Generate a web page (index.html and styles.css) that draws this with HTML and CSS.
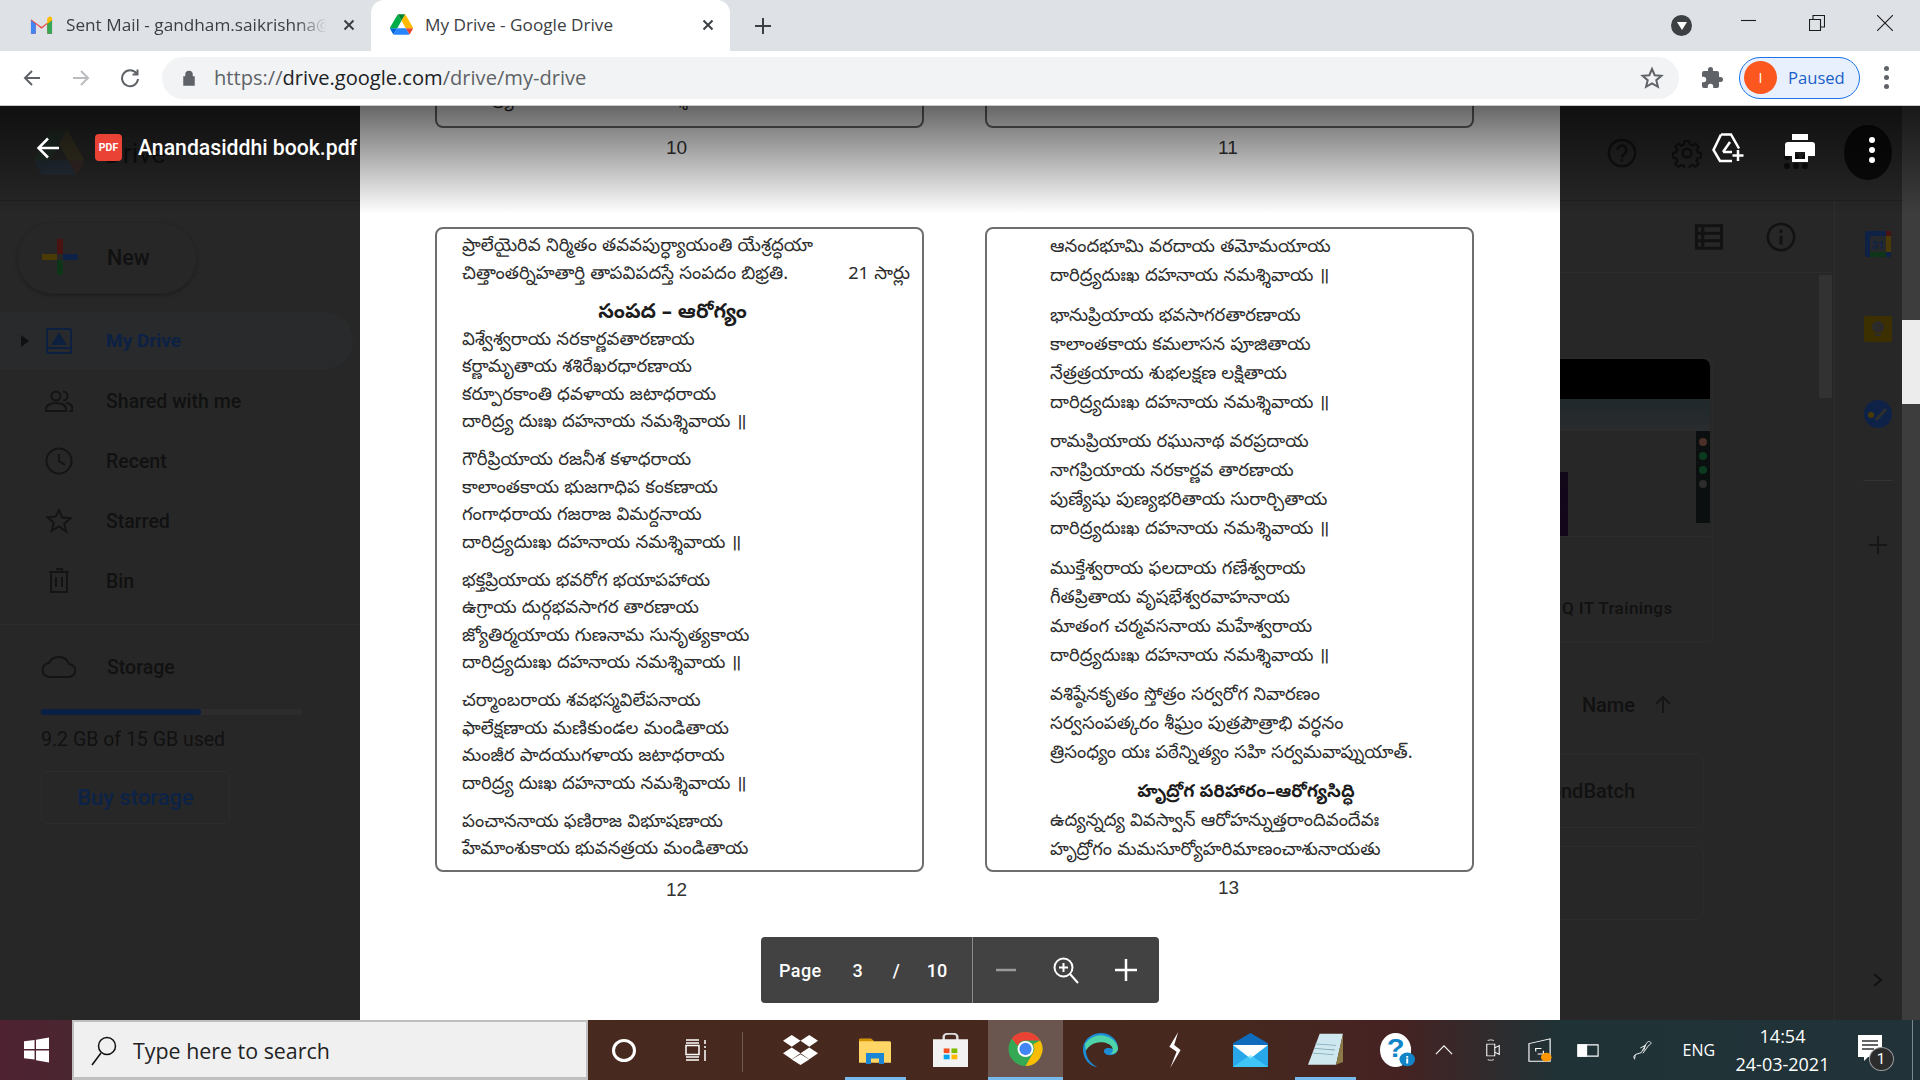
FILE: index.html
```html
<!DOCTYPE html>
<html lang="te">
<head>
    <meta charset="UTF-8">
    <title>My Drive - Google Drive</title>
    <link rel="stylesheet" href="styles.css">
</head>
<body>
    <!-- browser tabs -->
    <div class="tabstrip">
        <div class="tab">
            <svg class="favicon" viewBox="0 0 24 18"><path d="M1 18V3l11 8 11-8v15h-5V8l-6 5-6-5v10z" fill="#ea4335"/><path d="M1 18h5V8L1 4z" fill="#4285f4"/><path d="M18 18h5V4l-5 4z" fill="#34a853"/><path d="M18 8l5-4V2c0-1.500-2-2.500-3-1.500L18 2z" fill="#fbbc04"/></svg>
            <span class="tab-title fade">Sent Mail - gandham.saikrishna@</span>
            <svg class="tab-close" viewBox="0 0 12 12"><path d="M1.500 1.500l9 9m0-9l-9 9"/></svg>
        </div>
        <div class="tab tab-active">
            <svg class="favicon" viewBox="0 0 87.300 78"><use href="#drive-logo"/></svg>
            <span class="tab-title">My Drive - Google Drive</span>
            <svg class="tab-close" viewBox="0 0 12 12"><path d="M1.500 1.500l9 9m0-9l-9 9"/></svg>
        </div>
        <svg class="newtab" viewBox="0 0 18 18"><path d="M9 1v16M1 9h16"/></svg>
        <div class="window-btns">
            <span class="tabsearch"><svg viewBox="0 0 10 8"><path d="M0 0h10L5 8z" fill="#fff"/></svg></span>
            <svg class="win-icon" viewBox="0 0 16 16"><path d="M0 5.500h15"/></svg>
            <svg class="win-icon" viewBox="0 0 16 16"><path d="M.5 4.500h11v11H.5zM4 4.500V.5h11.500V12h-4"/></svg>
            <svg class="win-icon" viewBox="0 0 16 16"><path d="M0 0l16 16M16 0L0 16"/></svg>
        </div>
    </div>

    <!-- address bar -->
    <div class="toolbar">
        <div class="nav-btns">
            <svg class="nav-icon" viewBox="0 0 20 20"><path d="M18 10H3m7-7l-7 7 7 7"/></svg>
            <svg class="nav-icon nav-off" viewBox="0 0 20 20"><path d="M2 10h15m-7-7l7 7-7 7"/></svg>
            <svg class="nav-icon" viewBox="0 0 20 20"><path d="M16.500 5.500A8 8 0 1 0 18 11M17.500 1.500v5h-5" /></svg>
        </div>
        <div class="omnibox">
            <svg class="lock" viewBox="0 0 12 16"><path d="M1 7h10v8H1zM3 7V4.500a3 3 0 0 1 6 0V7" fill="#5f6368" stroke="#5f6368" stroke-width="1.500"/></svg>
            <span class="url"><span class="url-dim">https://</span>drive.google.com<span class="url-dim">/drive/my-drive</span></span>
            <svg class="star" viewBox="0 0 24 24"><path d="M12 3l2.700 6.200 6.700.6-5.100 4.400 1.600 6.600-5.900-3.500-5.900 3.500 1.600-6.600L2.600 9.800l6.700-.6z"/></svg>
        </div>
        <svg class="puzzle" viewBox="0 0 24 24"><path d="M20.500 11H19V7a2 2 0 0 0-2-2h-4V3.500a2.500 2.500 0 0 0-5 0V5H4a2 2 0 0 0-2 2v3.800h1.500a2.700 2.700 0 0 1 0 5.400H2V20a2 2 0 0 0 2 2h3.800v-1.500a2.700 2.700 0 0 1 5.400 0V22H17a2 2 0 0 0 2-2v-4h1.500a2.500 2.500 0 0 0 0-5z" fill="#5f6368"/></svg>
        <div class="paused">
            <span class="avatar">I</span>
            <span>Paused</span>
        </div>
        <div class="chrome-menu"><i></i><i></i><i></i></div>
    </div>

    <div class="viewer">
        <!-- drive page, dimmed behind the pdf preview -->
        <div class="drive">
            <div class="drive-head">
                <svg class="drive-logo" viewBox="0 0 87.300 78"><use href="#drive-logo"/></svg>
                <span class="drive-name">Drive</span>
                <div class="head-icons">
                    <svg class="dim-icon" viewBox="0 0 24 24"><circle cx="12" cy="12" r="10.500"/><path d="M8.500 9.500a3.500 3.500 0 1 1 5.500 3c-1.300.9-2 1.500-2 3M12 17v2"/></svg>
                    <svg class="dim-icon" viewBox="0 0 24 24"><circle cx="12" cy="12" r="3.500"/><path d="M10 1.500h4l.6 3 2.300 1 2.600-1.700 2.800 2.800-1.700 2.600 1 2.300 3 .6v4l-3 .6-1 2.300 1.700 2.600-2.800 2.800-2.600-1.700-2.300 1-.6 3h-4l-.6-3-2.300-1-2.600 1.700-2.800-2.800 1.700-2.600-1-2.300-3-.6v-4l3-.6 1-2.300-1.700-2.600 2.800-2.800 2.600 1.700 2.300-1z" transform="translate(-.2 -.2) scale(.9) translate(1.500 1.500)"/></svg>
                    <div class="waffle"><i></i><i></i><i></i><i></i><i></i><i></i><i></i><i></i><i></i></div>
                    <span class="drive-avatar"></span>
                </div>
            </div>
            <div class="drive-body">
                <aside class="sidebar">
                    <div class="new-btn">
                        <svg class="new-plus" viewBox="0 0 36 36"><path d="M15 0h6v15h-6z" fill="#4a1210"/><path d="M21 15h15v6H21z" fill="#0e2248"/><path d="M15 21h6v15h-6z" fill="#0e3518"/><path d="M0 15h15v6H0z" fill="#4a3a06"/></svg>
                        <span>New</span>
                    </div>
                    <nav class="side-nav">
                        <div class="side-row side-selected">
                            <svg class="caret" viewBox="0 0 8 12"><path d="M0 0l8 6-8 6z"/></svg>
                            <svg class="side-icon blue" viewBox="0 0 28 28"><path d="M3 2h22a1 1 0 0 1 1 1v22a1 1 0 0 1-1 1H3a1 1 0 0 1-1-1V3a1 1 0 0 1 1-1zM2 21h24"/><path d="M14 7l6 10H8z" fill="#0d2040"/></svg>
                            <span>My Drive</span>
                        </div>
                        <div class="side-row">
                            <svg class="side-icon" viewBox="0 0 28 28"><circle cx="11" cy="9" r="4.500"/><path d="M1 24v-2c0-4 5-6 10-6s10 2 10 6v2zM18 4.500a4.500 4.500 0 0 1 0 9M21 16c4 .5 6.500 2.500 6.500 6v2H24"/></svg>
                            <span>Shared with me</span>
                        </div>
                        <div class="side-row">
                            <svg class="side-icon" viewBox="0 0 28 28"><circle cx="14" cy="14" r="12.500"/><path d="M14 7v7l6 4"/></svg>
                            <span>Recent</span>
                        </div>
                        <div class="side-row">
                            <svg class="side-icon" viewBox="0 0 28 28"><path d="M14 3l3.300 7.600 8.200.7-6.200 5.400 1.900 8L14 19.500 6.800 23.700l1.900-8-6.200-5.400 8.200-.7z"/></svg>
                            <span>Starred</span>
                        </div>
                        <div class="side-row">
                            <svg class="side-icon" viewBox="0 0 28 28"><path d="M4 5h20M6 5v20h16V5M11 2h6v3M11 10v10m6-10v10"/></svg>
                            <span>Bin</span>
                        </div>
                    </nav>
                    <div class="storage">
                        <div class="storage-row">
                            <svg class="side-icon wide" viewBox="0 0 36 24"><path d="M9 22a7 7 0 0 1-1-14A11 11 0 0 1 28 9a6.500 6.500 0 0 1-.5 13z"/></svg>
                            <span>Storage</span>
                        </div>
                        <div class="quota"><div class="quota-fill"></div></div>
                        <div class="quota-text">9.2 GB of 15 GB used</div>
                        <div class="buy-btn">Buy storage</div>
                    </div>
                </aside>

                <main class="drive-main">
                    <div class="main-bar">
                        <svg class="dim-icon" viewBox="0 0 24 24"><path d="M2 3h20v18H2zM2 9h20M2 15h20M7 3v18" stroke-width="2.500"/></svg>
                        <svg class="dim-icon" viewBox="0 0 24 24"><circle cx="12" cy="12" r="10.500"/><path d="M12 11v7M12 6v2.500" stroke-width="2.500"/></svg>
                    </div>
                    <div class="main-scroll">
                        <div class="files">
                            <div class="preview">
                                <div class="thumb-black"></div>
                                <div class="thumb-strip"></div>
                                <div class="thumb-body">
                                    <div class="thumb-photo"></div>
                                    <div class="thumb-rail"><i class="dot-a"></i><i class="dot-b"></i><i class="dot-b"></i><i class="dot-c"></i></div>
                                </div>
                                <div class="preview-name">Q IT Trainings</div>
                            </div>
                            <div class="sort-row">
                                <span>Name</span>
                                <svg class="sort-arrow" viewBox="0 0 20 20"><path d="M10 18V3M3 9l7-7 7 7"/></svg>
                            </div>
                            <div class="file-row">ondBatch</div>
                            <div class="file-row"></div>
                        </div>
                        <div class="inner-scrollbar"><div class="inner-thumb"></div></div>
                    </div>
                </main>

                <div class="rail">
                    <svg class="rail-app cal" viewBox="0 0 28 28"><rect x="1" y="1" width="26" height="26" rx="2" fill="#0e2248"/><rect x="6" y="6" width="16" height="16" fill="#26282c"/><path d="M22 1h5v5h-5z" fill="#4a1210"/><path d="M22 6h5v16h-5z" fill="#4a3a06"/><path d="M6 22h16v5H6z" fill="#0e3518"/><text x="14" y="19" class="cal-num">31</text></svg>
                    <svg class="rail-app" viewBox="0 0 28 28"><rect y="1" width="28" height="26" rx="2" fill="#3d3000"/><circle cx="14" cy="12" r="6" fill="#2b2b2b"/><path d="M11 19h6v2h-6z" fill="#2b2b2b"/></svg>
                    <svg class="rail-app" viewBox="0 0 28 28"><circle cx="14" cy="14" r="14" fill="#0e2248"/><circle cx="7" cy="15" r="3" fill="#4a3a06"/><path d="M12 20L22 9" stroke="#2f2f2f" stroke-width="3" fill="none"/></svg>
                    <div class="rail-line"></div>
                    <svg class="rail-plus" viewBox="0 0 18 18"><path d="M9 0v18M0 9h18"/></svg>
                    <svg class="rail-chev" viewBox="0 0 10 14"><path d="M1 1l7 6-7 6"/></svg>
                </div>
            </div>
        </div>
        <div class="page-scroll"><div class="page-thumb"></div></div>

        <!-- pdf pages -->
        <div class="pdf">
            <div class="spread">
                <div class="pdf-page pdf-cut"><span class="line">దారిద్ర్య దుఃఖ దహనాయ నమశ్శివాయ ॥</span></div>
                <div class="pdf-page pdf-cut"></div>
                <div class="pageno">10</div>
                <div class="pageno">11</div>
            </div>
            <div class="spread spread-main">
                <div class="pdf-page tight">
                    <p class="lines"><span class="line">ప్రాలేయైరివ నిర్మితం తవవపుర్ధ్యాయంతి యేశ్రద్ధయా</span><span class="line line-end"><span>చిత్తాంతర్నిహతార్తి తాపవిపదస్తే సంపదం బిభ్రతి.</span><span>21 సార్లు</span></span></p>
                    <h4 class="verse-title">సంపద – ఆరోగ్యం</h4>
                    <p class="lines"><span class="line">విశ్వేశ్వరాయ నరకార్ణవతారణాయ</span><span class="line">కర్ణామృతాయ శశిరేఖరధారణాయ</span><span class="line">కర్పూరకాంతి ధవళాయ జటాధరాయ</span><span class="line">దారిద్ర్య దుఃఖ దహనాయ నమశ్శివాయ ॥</span></p>
                    <p class="lines"><span class="line">గౌరీప్రియాయ రజనీశ కళాధరాయ</span><span class="line">కాలాంతకాయ భుజగాధిప కంకణాయ</span><span class="line">గంగాధరాయ గజరాజ విమర్దనాయ</span><span class="line">దారిద్ర్యదుఃఖ దహనాయ నమశ్శివాయ ॥</span></p>
                    <p class="lines"><span class="line">భక్తప్రియాయ భవరోగ భయాపహాయ</span><span class="line">ఉగ్రాయ దుర్గభవసాగర తారణాయ</span><span class="line">జ్యోతిర్మయాయ గుణనామ సునృత్యకాయ</span><span class="line">దారిద్ర్యదుఃఖ దహనాయ నమశ్శివాయ ॥</span></p>
                    <p class="lines"><span class="line">చర్మాంబరాయ శవభస్మవిలేపనాయ</span><span class="line">ఫాలేక్షణాయ మణికుండల మండితాయ</span><span class="line">మంజీర పాదయుగళాయ జటాధరాయ</span><span class="line">దారిద్ర్య దుఃఖ దహనాయ నమశ్శివాయ ॥</span></p>
                    <p class="lines"><span class="line">పంచాననాయ ఫణిరాజ విభూషణాయ</span><span class="line">హేమాంశుకాయ భువనత్రయ మండితాయ</span></p>
                </div>
                <div class="pdf-page loose">
                    <p class="lines"><span class="line">ఆనందభూమి వరదాయ తమోమయాయ</span><span class="line">దారిద్ర్యదుఃఖ దహనాయ నమశ్శివాయ ॥</span></p>
                    <p class="lines"><span class="line">భానుప్రియాయ భవసాగరతారణాయ</span><span class="line">కాలాంతకాయ కమలాసన పూజితాయ</span><span class="line">నేత్రత్రయాయ శుభలక్షణ లక్షితాయ</span><span class="line">దారిద్ర్యదుఃఖ దహనాయ నమశ్శివాయ ॥</span></p>
                    <p class="lines"><span class="line">రామప్రియాయ రఘునాథ వరప్రదాయ</span><span class="line">నాగప్రియాయ నరకార్ణవ తారణాయ</span><span class="line">పుణ్యేషు పుణ్యభరితాయ సురార్చితాయ</span><span class="line">దారిద్ర్యదుఃఖ దహనాయ నమశ్శివాయ ॥</span></p>
                    <p class="lines"><span class="line">ముక్తేశ్వరాయ ఫలదాయ గణేశ్వరాయ</span><span class="line">గీతప్రితాయ వృషభేశ్వరవాహనాయ</span><span class="line">మాతంగ చర్మవసనాయ మహేశ్వరాయ</span><span class="line">దారిద్ర్యదుఃఖ దహనాయ నమశ్శివాయ ॥</span></p>
                    <p class="lines"><span class="line">వశిష్ఠేనకృతం స్తోత్రం సర్వరోగ నివారణం</span><span class="line">సర్వసంపత్కరం శీఘ్రం పుత్రపౌత్రాభి వర్ధనం</span><span class="line">త్రిసంధ్యం యః పఠేన్నిత్యం సహి సర్వమవాప్నుయాత్.</span></p>
                    <h4 class="verse-title">హృద్రోగ పరిహారం–ఆరోగ్యసిద్ధి</h4>
                    <p class="lines"><span class="line">ఉద్యన్నద్య వివస్వాన్ ఆరోహన్నుత్తరాందివందేవః</span><span class="line">హృద్రోగం మమసూర్యోహరిమాణంచాశునాయతు</span></p>
                </div>
                <div class="pageno">12</div>
                <div class="pageno pageno-up">13</div>
            </div>
        </div>

        <div class="top-shade"></div>

        <!-- preview header -->
        <div class="pdf-head">
            <svg class="back" viewBox="0 0 24 24"><path d="M23 12H3m9-9.500L2.500 12l9.500 9.500"/></svg>
            <span class="pdf-badge">PDF</span>
            <span class="pdf-title">Anandasiddhi book.pdf</span>
            <div class="pdf-actions">
                <svg class="add-drive" viewBox="0 0 34 30"><path d="M9 1.500h10l8 14M9 1.500L1.500 17 8 28h12M11 19l7-10 M11 19h9" /><path d="M26 17v11M20.500 22.500h11"/></svg>
                <svg class="print" viewBox="0 0 30 28"><path d="M7 0h16v6H7z" fill="#fff"/><path d="M3 8h24a3 3 0 0 1 3 3v11h-7v6H7v-6H0V11a3 3 0 0 1 3-3zm7 10v7h10v-7z" fill="#fff"/></svg>
                <div class="pdf-more"><i></i><i></i><i></i></div>
            </div>
        </div>

        <div class="zoom-bar">
            <div class="zoom-pages">
                <span class="zoom-label">Page</span>
                <span class="zoom-cur">3</span>
                <span class="zoom-sep">/</span>
                <span class="zoom-total">10</span>
            </div>
            <div class="zoom-tools">
                <svg class="zoom-tool tool-off" viewBox="0 0 24 24"><path d="M2 12h20"/></svg>
                <svg class="zoom-tool" viewBox="0 0 28 28"><circle cx="11.500" cy="11.500" r="9"/><path d="M18 18l8 9M11.500 7v9M7 11.500h9" /></svg>
                <svg class="zoom-tool" viewBox="0 0 24 24"><path d="M12 1v22M1 12h22"/></svg>
            </div>
        </div>
    </div>

    <!-- windows taskbar -->
    <div class="taskbar">
        <div class="start"><svg viewBox="0 0 26 26"><path d="M0 4l11-1.500V12H0zM12.500 2.300L26 0v12H12.500zM0 13.500h11V23L0 21.500zM12.500 13.500H26V26l-13.500-2.300z" fill="#fff"/></svg></div>
        <div class="search">
            <svg class="search-icon" viewBox="0 0 26 30"><circle cx="16" cy="10" r="8.500"/><path d="M10 17L1 29"/></svg>
            <span>Type here to search</span>
        </div>
        <div class="tb-icons">
            <div class="tb-slot tb-small"><span class="cortana"></span></div>
            <div class="tb-slot tb-small"><svg class="ic-view" viewBox="0 0 22 22" preserveAspectRatio="none"><path d="M1 1h13M1 4h13M1 6.500h13v9H1zM1 18h13M1 21h13M20 1v4M20 7v2M20 11v11"/></svg></div>
            <div class="tb-sep"></div>
            <div class="tb-slot"><svg class="ic-dropbox" viewBox="0 0 36 36" preserveAspectRatio="none"><path d="M9 0l9 7-9 7-9-7zM27 0l9 7-9 7-9-7zM9 15l9 7-9 7-9-7zM27 15l9 7-9 7-9-7zM18 23l9 6.500-9 6.500-9-6.500z" fill="#fff"/></svg></div>
            <div class="tb-slot tb-open"><svg class="ic-folder" viewBox="0 0 32 44" preserveAspectRatio="none"><path d="M0 5a2 2 0 0 1 2-2h10l3 4h15a2 2 0 0 1 2 2v33H0z" fill="#ffd666"/><path d="M0 3h12l3 4H0z" fill="#d39300"/><path d="M7 26h18v18h-5v-9h-8v9H7z" fill="#1b86d6"/></svg></div>
            <div class="tb-slot"><svg class="ic-square" viewBox="0 0 36 44" preserveAspectRatio="none"><path d="M11 10V5a4 4 0 0 1 4-4h6a4 4 0 0 1 4 4v5" fill="none" stroke="#ddd" stroke-width="2.500"/><path d="M0 8h36v36H0z" fill="#f2f2f2"/><path d="M11 20h6v6h-6z" fill="#f25022"/><path d="M19 20h6v6h-6z" fill="#7fba00"/><path d="M11 28h6v6h-6z" fill="#00a4ef"/><path d="M19 28h6v6h-6z" fill="#ffb900"/></svg></div>
            <div class="tb-slot tb-active">
                <svg class="ic-square" viewBox="0 0 36 36"><circle cx="18" cy="18" r="18" fill="#34a853"/><path d="M18 0a18 18 0 0 1 15.600 9H18a9 9 0 0 0-8.300 5.500L3.400 7A18 18 0 0 1 18 0z" fill="#ea4335"/><path d="M33.600 9A18 18 0 0 1 18 36l7.800-13.500A9 9 0 0 0 26 13z" fill="#fbbc04"/><circle cx="18" cy="18" r="8.500" fill="#fff"/><circle cx="18" cy="18" r="6.500" fill="#4285f4"/></svg>
            </div>
            <div class="tb-slot"><svg class="ic-square" viewBox="0 0 36 40" preserveAspectRatio="none"><path d="M18 0a18 18 0 0 1 18 18c0 5-4 9-10 8-5-1-6-6-2-8 4-1 7 1 7 1-1-7-6-11-13-11-9 0-15 7-15 13 0 8 5 16 12 19C7 40 0 30 0 20A19 19 0 0 1 18 0z" fill="#1b8dd6"/><path d="M2 13A18 18 0 0 1 36 18c0 4-3 7-8 7 6-4 2-14-10-14-7 0-13 5-15 10z" fill="#4fd3a8"/></svg></div>
            <div class="tb-slot"><svg class="ic-slim" viewBox="0 0 20 44" preserveAspectRatio="none"><path d="M14 0L3 18l9 6-8 20 13-22-8-6z" fill="#fff"/></svg></div>
            <div class="tb-slot"><svg class="ic-square" viewBox="0 0 36 40" preserveAspectRatio="none"><path d="M18 0l18 12v28H0V12z" fill="#0f6cbd"/><path d="M0 14h36v26H0z" fill="#28a8ea"/><path d="M0 14l18 16 18-16z" fill="#fff"/><path d="M0 40l18-14 18 14z" fill="#50d9ff" opacity=".6"/></svg></div>
            <div class="tb-slot tb-open"><svg class="ic-square" viewBox="0 0 30 44" preserveAspectRatio="none"><path d="M10 1h20l-6 40H0z" fill="#cfe7ee"/><path d="M6 14l18 2M5 20l18 2M4 26l18 2" stroke="#7fa8b6" fill="none"/><path d="M24 41l6-40 1 36z" fill="#8c7a46"/></svg></div>
            <div class="tb-slot tb-help"><svg class="ic-square" viewBox="0 0 36 40" preserveAspectRatio="none"><ellipse cx="16" cy="20" rx="16" ry="20" fill="#fff"/><text x="16" y="28" class="help-q">?</text><circle cx="28" cy="31" r="8" fill="#1285c9"/><path d="M27 27h2v2h-2zM27 30h2v6h-2z" fill="#fff"/></svg></div>
        </div>
        <div class="tray">
            <svg class="tray-icon tray-up" viewBox="0 0 20 12" preserveAspectRatio="none"><path d="M1 11l9-10 9 10"/></svg>
            <svg class="tray-icon tray-meet" viewBox="0 0 18 30" preserveAspectRatio="none"><path d="M2 7h9v16H2zM11 12l5-3v12l-5-3M3 2c2-1 5-1 7 0M3 28c2 1 5 1 7 0"/></svg>
            <svg class="tray-icon tray-screen" viewBox="0 0 26 30" preserveAspectRatio="none"><path d="M1 7l22-6v28H1zM8 17v-4h6m2 3v4h-6"/><circle cx="19" cy="24" r="5.500" fill="#ff9800" stroke="none"/></svg>
            <svg class="tray-icon tray-batt" viewBox="0 0 24 14" preserveAspectRatio="none"><path d="M1 1h21v12H1z"/><path d="M1 1h9v12H1z" fill="#fff"/></svg>
            <svg class="tray-icon tray-pen" viewBox="0 0 24 30" preserveAspectRatio="none"><path d="M3 28c-2-3 0-6 3-7l5-2 6-13c1-3 3-5 5-3s0 4-2 5l-7 12M10 12l6-4-2 8M4 22l-1 7"/></svg>
            <span class="lang">ENG</span>
            <div class="clock"><span>14:54</span><span>24-03-2021</span></div>
            <div class="notif">
                <svg viewBox="0 0 24 26" preserveAspectRatio="none"><path d="M0 0h24v22H10l-4 4v-4H0z" fill="#fff"/><path d="M4 6h16M4 10h16M4 14h12" stroke="#333" stroke-width="1.500"/></svg>
                <span class="notif-count">1</span>
            </div>
            <div class="peek"></div>
        </div>
    </div>

    <svg class="defs" width="0" height="0">
        <defs>
            <g id="drive-logo">
                <path d="m6.600 66.850 3.850 6.650c.8 1.400 1.950 2.500 3.300 3.300l13.750-23.800h-27.500c0 1.550.4 3.100 1.200 4.500z" fill="#0066da"/>
                <path d="m43.650 25-13.750-23.800c-1.350.8-2.500 1.900-3.300 3.300l-25.400 44a9.060 9.060 0 0 0 -1.200 4.500h27.500z" fill="#00ac47"/>
                <path d="m73.550 76.800c1.350-.8 2.500-1.900 3.300-3.300l1.600-2.750 7.650-13.250c.8-1.400 1.200-2.950 1.200-4.500h-27.502l5.852 11.500z" fill="#ea4335"/>
                <path d="m43.650 25 13.750-23.800c-1.350-.8-2.900-1.200-4.500-1.200h-18.500c-1.600 0-3.150.45-4.500 1.200z" fill="#00832d"/>
                <path d="m59.800 53h-32.300l-13.750 23.800c1.350.8 2.900 1.200 4.500 1.200h50.800c1.600 0 3.150-.45 4.500-1.200z" fill="#2684fc"/>
                <path d="m73.400 26.500-12.700-22c-.8-1.400-1.950-2.500-3.300-3.300l-13.750 23.800 16.150 28h27.450c0-1.550-.4-3.100-1.200-4.500z" fill="#ffba00"/>
            </g>
        </defs>
    </svg>
</body>
</html>
```

FILE: styles.css
```css
* {
    box-sizing: border-box;
}
body {
    margin: 0;
    width: 1920px;
    height: 1080px;
    overflow: hidden;
    display: flex;
    flex-direction: column;
    font-family: Roboto, "Liberation Sans", sans-serif;
    background-color: #272727;
}
.defs {
    position: absolute;
}

/* tabs */
.tabstrip {
    height: 51px;
    display: flex;
    align-items: center;
    background-color: #dee1e6;
}
.tab {
    height: 51px;
    padding: 0 14px 2px 30px;
    display: flex;
    align-items: center;
    flex-shrink: 0;
    width: 359px;
}
.tab:first-child {
    width: 371px;
    padding-right: 16px;
}
.tab-active {
    padding: 0 16px 2px 19px;
    background-color: #ffffff;
    border-radius: 13px 13px 0 0;
}
.favicon {
    width: 23px;
    height: 18px;
    flex-shrink: 0;
}
.tab-active .favicon {
    height: 23px;
}
.tab-title {
    flex: 1;
    margin-left: 13px;
    font-family: "Open Sans", sans-serif;
    font-size: 17.2px;
    color: #3c4043;
    white-space: nowrap;
    overflow: hidden;
}
.tab-active .tab-title {
    margin-left: 12px;
}
.fade {
    -webkit-mask-image: linear-gradient(to right, #000 88%, transparent);
    mask-image: linear-gradient(to right, #000 88%, transparent);
}
.tab-close {
    width: 12px;
    height: 12px;
    margin-left: 16px;
    fill: none;
    stroke: #3c4043;
    stroke-width: 2;
}
.newtab {
    width: 18px;
    height: 18px;
    margin-left: 24px;
    fill: none;
    stroke: #3c4043;
    stroke-width: 2;
}
.window-btns {
    margin-left: auto;
    padding-right: 27px;
    display: flex;
    align-items: center;
}
.tabsearch {
    width: 21px;
    height: 21px;
    border-radius: 50%;
    background-color: #3c4043;
    display: flex;
    align-items: center;
    justify-content: center;
    margin-right: 49px;
}
.tabsearch svg {
    width: 10px;
    height: 8px;
}
.win-icon {
    width: 16px;
    height: 16px;
    margin-left: 52px;
    fill: none;
    stroke: #1c1c1c;
    stroke-width: 1.1;
    margin-bottom: 6px;
}
.tabsearch + .win-icon {
    margin-left: 0;
}

/* address bar */
.toolbar {
    height: 55px;
    display: flex;
    align-items: center;
    padding-bottom: 1px;
    background-color: #ffffff;
    border-bottom: 1px solid #c9c9c9;
}
.nav-btns {
    width: 162px;
    flex-shrink: 0;
    padding-left: 22px;
    display: flex;
    gap: 29px;
}
.nav-icon {
    width: 20px;
    height: 20px;
    fill: none;
    stroke: #5f6368;
    stroke-width: 2;
}
.nav-off {
    stroke: #babcbe;
}
.omnibox {
    width: 1517px;
    height: 42px;
    padding: 0 15px 0 21px;
    display: flex;
    align-items: center;
    border-radius: 21px;
    background-color: #f1f3f4;
    font-family: "Open Sans", sans-serif;
    font-size: 20.1px;
}
.lock {
    width: 12px;
    height: 16px;
    margin-right: 19px;
}
.url {
    color: #202124;
}
.url-dim {
    color: #5f6368;
}
.star {
    width: 24px;
    height: 24px;
    margin-left: auto;
    fill: none;
    stroke: #5f6368;
    stroke-width: 2;
}
.puzzle {
    width: 24px;
    height: 24px;
    margin-left: 21px;
}
.paused {
    width: 121px;
    height: 42px;
    margin-left: 15px;
    padding-left: 4px;
    display: flex;
    align-items: center;
    gap: 11px;
    border: 1.5px solid #1a73e8;
    border-radius: 21px;
    background-color: #e8f0fe;
    font-family: "Open Sans", sans-serif;
    font-size: 16.6px;
    color: #1a5fc9;
}
.avatar {
    width: 33px;
    height: 33px;
    border-radius: 50%;
    background-color: #fb571f;
    color: #ffffff;
    display: flex;
    align-items: center;
    justify-content: center;
    font-size: 14px;
}
.chrome-menu {
    margin-left: 24px;
    display: flex;
    flex-direction: column;
    gap: 4px;
}
.chrome-menu i {
    width: 5px;
    height: 5px;
    border-radius: 50%;
    background-color: #5f6368;
}

/* dimmed drive */
.viewer {
    flex: 1;
    position: relative;
    display: flex;
    min-height: 0;
    overflow: hidden;
}
.drive {
    flex: 1;
    display: flex;
    flex-direction: column;
    min-width: 0;
    color: #111111;
}
.drive-head {
    height: 95px;
    flex-shrink: 0;
    padding: 19px 10px 0 34px;
    display: flex;
    align-items: flex-start;
    border-bottom: 1px solid #202020;
}
.drive-logo {
    width: 50px;
    height: 45px;
    margin-top: 5px;
    opacity: .08;
}
.drive-name {
    margin: 13px 0 0 21px;
    font-size: 27px;
}
.head-icons {
    margin-left: auto;
    display: flex;
    align-items: center;
}
.dim-icon {
    width: 30px;
    height: 30px;
    fill: none;
    stroke: #121212;
    stroke-width: 2;
}
.head-icons .dim-icon + .dim-icon {
    margin-left: 35px;
}
.waffle {
    width: 24px;
    margin: 0 0 -8px 82px;
    display: grid;
    grid-template-columns: repeat(3, 6px);
    gap: 3px;
}
.waffle i {
    height: 6px;
    border-radius: 50%;
    background-color: #0d0d0d;
}
.drive-avatar {
    width: 48px;
    height: 55px;
    margin-left: 36px;
    border-radius: 50%;
    background-color: #0a0a0a;
}
.drive-body {
    flex: 1;
    display: flex;
    min-height: 0;
}

/* sidebar */
.sidebar {
    width: 360px;
    flex-shrink: 0;
}
.new-btn {
    width: 180px;
    height: 72px;
    margin: 21px 0 0 17px;
    padding: 0 0 2px 24px;
    display: flex;
    align-items: center;
    gap: 29px;
    border-radius: 36px;
    border: 1px solid #242424;
    box-shadow: 0 2px 3px #1e1e1e;
    font-size: 21.500px;
    font-weight: 500;
}
.new-plus {
    width: 36px;
    height: 36px;
}
.side-nav {
    margin-top: 18px;
    display: flex;
    flex-direction: column;
    gap: 3px;
}
.side-row {
    width: 353px;
    height: 57px;
    padding: 1px 0 0 45px;
    display: flex;
    align-items: center;
    gap: 33px;
    font-size: 19.500px;
    font-weight: 500;
    color: #111111;
    border-radius: 0 29px 29px 0;
}
.side-selected {
    padding: 0 0 0 21px;
    background-color: #282a2c;
    color: #0c2145;
    font-weight: 700;
    font-size: 19px;
}
.caret {
    width: 8px;
    height: 12px;
    fill: #111111;
    margin-right: -17px;
}
.side-icon {
    width: 28px;
    height: 28px;
    fill: none;
    stroke: #141414;
    stroke-width: 2;
}
.blue {
    stroke: #0d2040;
}
.storage {
    margin-top: 15px;
    padding: 27px 0 0 41px;
    border-top: 1px solid #2c2c2c;
}
.storage-row {
    display: flex;
    align-items: center;
    gap: 30px;
    height: 30px;
    font-size: 19.500px;
    font-weight: 500;
    color: #111111;
}
.wide {
    width: 36px;
    height: 24px;
}
.quota {
    width: 262px;
    height: 6px;
    margin-top: 27px;
    border-radius: 3px;
    background-color: #2c2c2c;
}
.quota-fill {
    width: 160px;
    height: 6px;
    border-radius: 3px;
    background-color: #0a1f44;
}
.quota-text {
    margin-top: 13px;
    font-size: 19.500px;
    color: #111111;
}
.buy-btn {
    width: 189px;
    height: 53px;
    margin-top: 20px;
    display: flex;
    align-items: center;
    justify-content: center;
    border: 1px solid #2c2c2c;
    border-radius: 5px;
    font-size: 22px;
    font-weight: 500;
    color: #0c2347;
}

/* main area, only the right end shows */
.drive-main {
    flex: 1;
    min-width: 0;
    display: flex;
    flex-direction: column;
    border-right: 1px solid #2e2e2e;
}
.main-bar {
    height: 72px;
    flex-shrink: 0;
    padding-right: 38px;
    display: flex;
    align-items: center;
    justify-content: flex-end;
    gap: 42px;
    border-bottom: 1px solid #2c2c2c;
}
.main-scroll {
    flex: 1;
    display: flex;
    min-height: 0;
}
.files {
    flex: 1;
    padding: 85px 106px 0 0;
    display: flex;
    flex-direction: column;
    align-items: flex-end;
}
.preview {
    width: 400px;
    height: 285px;
    padding-right: 2px;
    display: flex;
    flex-direction: column;
    border: 1px solid #2c2c2c;
    border-radius: 8px;
}
.thumb-black {
    height: 40px;
    background-color: #000000;
    border-radius: 7px 7px 0 0;
}
.thumb-strip {
    height: 32px;
    background: linear-gradient(#1f282b, #2a2c2e);
}
.thumb-body {
    height: 106px;
    display: flex;
    justify-content: flex-end;
    gap: 128px;
    border-bottom: 1px solid #2c2c2c;
}
.thumb-photo {
    width: 100px;
    height: 64px;
    align-self: flex-end;
    background: linear-gradient(135deg, #0b0b18, #14051a);
}
.thumb-rail {
    width: 14px;
    height: 92px;
    padding-top: 7px;
    display: flex;
    flex-direction: column;
    align-items: center;
    gap: 6px;
    background-color: #0c0f0f;
}
.thumb-rail i {
    width: 8px;
    height: 8px;
    border-radius: 50%;
}
.dot-a {
    background-color: #4a3027;
}
.dot-b {
    background-color: #0b3a20;
}
.dot-c {
    background-color: #2c2c2c;
}
.preview-name {
    flex: 1;
    padding: 36px 0 0 248px;
    display: flex;
    align-items: center;
    font-size: 17px;
    font-weight: 500;
    color: #111111;
    white-space: nowrap;
    letter-spacing: .4px;
}
.sort-row {
    height: 62px;
    margin-top: 31px;
    padding-right: 40px;
    display: flex;
    align-items: center;
    gap: 18px;
    font-size: 20px;
    font-weight: 500;
    color: #111111;
}
.sort-arrow {
    width: 20px;
    height: 20px;
    fill: none;
    stroke: #161616;
    stroke-width: 2;
}
.file-row {
    width: 400px;
    height: 74px;
    margin-top: 18px;
    margin-right: 9px;
    padding-right: 68px;
    display: flex;
    align-items: center;
    justify-content: flex-end;
    border: 1px solid #2c2c2c;
    border-radius: 8px;
    font-size: 20px;
    font-weight: 500;
}
.inner-scrollbar {
    width: 15px;
    flex-shrink: 0;
}
.inner-thumb {
    width: 13px;
    height: 123px;
    margin-top: 2px;
    background-color: #323232;
}

/* right rail */
.rail {
    width: 67px;
    flex-shrink: 0;
    padding: 29px 0 0 18px;
    display: flex;
    flex-direction: column;
    align-items: center;
    gap: 57px;
}
.rail-app {
    width: 28px;
    height: 28px;
    flex-shrink: 0;
}
.cal-num {
    font-size: 11px;
    font-weight: 700;
    text-anchor: middle;
    fill: #0e2248;
}
.rail-line {
    width: 30px;
    height: 1px;
    margin: -5px 0 -2px;
    background-color: #333333;
}
.rail-plus {
    width: 18px;
    height: 18px;
    fill: none;
    stroke: #161616;
    stroke-width: 2;
}
.rail-chev {
    width: 10px;
    height: 14px;
    margin-top: auto;
    margin-bottom: 33px;
    fill: none;
    stroke: #111111;
    stroke-width: 2;
}
.page-scroll {
    width: 18px;
    flex-shrink: 0;
    background-color: #3d3d3d;
}
.page-thumb {
    height: 84px;
    margin-top: 214px;
    background-color: #ececec;
}

/* pdf pages, laid over the drive */
.pdf {
    position: absolute;
    top: 0;
    bottom: 0;
    left: 360px;
    width: 1200px;
    padding: 0 75px;
    background-color: #ffffff;
    overflow: hidden;
}
.spread {
    display: grid;
    grid-template-columns: 489px 489px;
    column-gap: 61px;
}
.spread-main {
    margin-top: 59px;
}
.pdf-page {
    height: 645px;
    border: 2px solid #6e6e6e;
    border-radius: 8px;
    padding: 5px 0 0 25px;
    font-family: "Noto Sans Telugu", "Noto Sans", Lato, sans-serif;
    font-size: 18.200px;
    color: #2e2e2e;
    overflow: hidden;
}
.pdf-cut {
    height: 22px;
    padding-top: 0;
    border-top: 0;
    border-radius: 0 0 8px 8px;
}
.tight .line {
    line-height: 27.500px;
}
.pdf-cut .line {
    margin-top: -16px;
    line-height: 20px;
}
.loose {
    padding-left: 63px;
}
.lines {
    margin: 0 0 10.500px;
}
.line {
    display: block;
    white-space: nowrap;
}
.loose .line {
    line-height: 29px;
}
.tight .line-end {
    display: flex;
    justify-content: space-between;
    padding-right: 12px;
}
.verse-title {
    margin: 0;
    text-align: center;
    font-size: 20.300px;
    font-weight: 700;
    line-height: 28px;
    color: #1c1c1c;
}
.tight .verse-title {
    padding-right: 39px;
}
.loose .verse-title {
    padding-right: 30px;
    font-size: 18px;
}
.pageno {
    height: 40px;
    padding: 9px 0 0 231px;
    font-family: "Liberation Sans", sans-serif;
    font-size: 19px;
    color: #333333;
}
.pageno + .pageno {
    padding-left: 233px;
}
.spread-main .pageno {
    padding-top: 7px;
}
.spread-main .pageno-up {
    padding-top: 5px;
}

.top-shade {
    position: absolute;
    top: 0;
    left: 0;
    right: 0;
    height: 108px;
    background: linear-gradient(rgba(0, 0, 0, .6), rgba(0, 0, 0, 0));
}

/* preview header */
.pdf-head {
    position: absolute;
    top: 0;
    left: 0;
    right: 0;
    height: 84px;
    padding: 28px 45px 0 36px;
    display: flex;
    align-items: flex-start;
    color: #ffffff;
}
.back {
    width: 24px;
    height: 28px;
    fill: none;
    stroke: #ffffff;
    stroke-width: 2.5;
}
.pdf-badge {
    width: 27px;
    height: 27px;
    margin-left: 35px;
    border-radius: 4px;
    background-color: #ea4335;
    display: flex;
    align-items: center;
    justify-content: center;
    font-size: 10.500px;
    font-weight: 700;
}
.pdf-title {
    margin-left: 16px;
    font-size: 21.200px;
    font-weight: 500;
    line-height: 28px;
}
.pdf-actions {
    margin-left: auto;
    display: flex;
    align-items: flex-start;
}
.add-drive {
    width: 34px;
    height: 30px;
    margin-top: -1px;
    fill: none;
    stroke: #ffffff;
    stroke-width: 2.5;
}
.print {
    width: 30px;
    height: 28px;
    margin-left: 39px;
}
.pdf-more {
    margin: 3px 0 0 54px;
    display: flex;
    flex-direction: column;
    gap: 4px;
}
.pdf-more i {
    width: 6px;
    height: 6px;
    border-radius: 50%;
    background-color: #ffffff;
}

/* page and zoom control */
.zoom-bar {
    position: absolute;
    left: 761px;
    top: 831px;
    width: 398px;
    height: 66px;
    display: flex;
    border-radius: 4px;
    background-color: #424242;
    color: #ffffff;
    font-size: 18px;
    font-weight: 500;
}
.zoom-pages {
    width: 212px;
    padding-left: 18px;
    display: flex;
    align-items: center;
    border-right: 1px solid #8a8a8a;
}
.zoom-label {
    letter-spacing: .4px;
}
.zoom-cur {
    margin-left: 31px;
}
.zoom-sep {
    margin-left: 30px;
}
.zoom-total {
    margin-left: 27px;
}
.zoom-tools {
    flex: 1;
    padding: 0 21px;
    display: flex;
    align-items: center;
    justify-content: space-between;
}
.zoom-tool {
    width: 24px;
    height: 24px;
    fill: none;
    stroke: #ffffff;
    stroke-width: 2.5;
}
.zoom-tool:nth-child(2) {
    width: 28px;
    height: 28px;
    stroke-width: 2;
}
.tool-off {
    stroke: #9a9a9a;
}

/* taskbar */
.taskbar {
    height: 60px;
    flex-shrink: 0;
    display: flex;
    background: linear-gradient(to right, #4f2232 0, #4a2630 72px, #48291f 600px, #46281f 1240px, #452222 1400px, #1f3236 1560px, #213338 1920px);
}
.start {
    width: 72px;
    display: flex;
    align-items: center;
    justify-content: center;
}
.start svg {
    width: 25px;
    height: 26px;
}
.search {
    width: 516px;
    padding: 2px 0 0 17px;
    display: flex;
    align-items: center;
    gap: 16px;
    background-color: #f0f0f0;
    border: 2px solid #c0c0c0;
    border-bottom-width: 3px;
    font-family: "Open Sans", sans-serif;
    font-size: 21.400px;
    color: #222222;
}
.search-icon {
    width: 26px;
    height: 30px;
    fill: none;
    stroke: #111111;
    stroke-width: 1.5;
}
.tb-icons {
    display: flex;
    align-items: stretch;
}
.tb-slot {
    width: 75px;
    display: flex;
    align-items: center;
    justify-content: center;
}
.tb-small {
    width: 72px;
}
.tb-help {
    margin-left: -3px;
}
.tb-open {
    background: linear-gradient(#76b9ed, #76b9ed) center bottom / 61px 3px no-repeat;
}
.tb-active {
    background-color: #6b554f;
    border-bottom: 3px solid #76b9ed;
}
.ic-view {
    width: 22px;
    height: 22px;
    fill: none;
    stroke: #ffffff;
    stroke-width: 1.5;
}
.ic-dropbox {
    width: 35px;
    height: 30px;
}
.ic-folder {
    width: 32px;
    height: 27px;
}
.ic-square {
    width: 35px;
    height: 34px;
}
.ic-slim {
    width: 16px;
    height: 36px;
}
.cortana {
    width: 24px;
    height: 23px;
    border: 3px solid #ffffff;
    border-radius: 50%;
}
.tb-sep {
    width: 1px;
    margin: 12px 19.500px 8px 10px;
    background-color: #6f5a50;
}
.help-q {
    font-family: "Liberation Sans", sans-serif;
    font-size: 30px;
    font-weight: 700;
    text-anchor: middle;
    fill: #1285c9;
}
.tray {
    flex: 1;
    display: flex;
    align-items: center;
    color: #ffffff;
}
.tray-icon {
    fill: none;
    stroke: #ffffff;
    stroke-width: 1.2;
    flex-shrink: 0;
}
.tray-up {
    width: 18px;
    height: 10px;
}
.tray-meet {
    width: 16px;
    height: 22px;
    margin-left: 32px;
}
.tray-screen {
    width: 25px;
    height: 24px;
    margin-left: 27px;
}
.tray-batt {
    width: 23px;
    height: 13px;
    margin-left: 24px;
}
.tray-pen {
    width: 20px;
    height: 20px;
    margin-left: 32px;
}
.lang {
    width: 33px;
    margin-left: 31px;
    font-family: "Open Sans", sans-serif;
    font-size: 16px;
}
.clock {
    width: 94px;
    margin-left: 20px;
    display: flex;
    flex-direction: column;
    align-items: center;
    gap: 3px;
    font-family: "Open Sans", sans-serif;
    font-size: 18px;
    line-height: 25px;
    white-space: nowrap;
}
.notif {
    position: relative;
    width: 24px;
    height: 26px;
    margin: -4px 0 0 28px;
}
.notif svg {
    width: 24px;
    height: 26px;
}
.notif-count {
    position: absolute;
    left: 11px;
    top: 12px;
    width: 25px;
    height: 24px;
    display: flex;
    align-items: center;
    justify-content: center;
    border-radius: 50%;
    background-color: #2c2c2c;
    border: 1px solid #9a9a9a;
    font-size: 15px;
}
.peek {
    align-self: stretch;
    width: 1px;
    margin-left: 30px;
    background-color: #7a8a8c;
}
```
